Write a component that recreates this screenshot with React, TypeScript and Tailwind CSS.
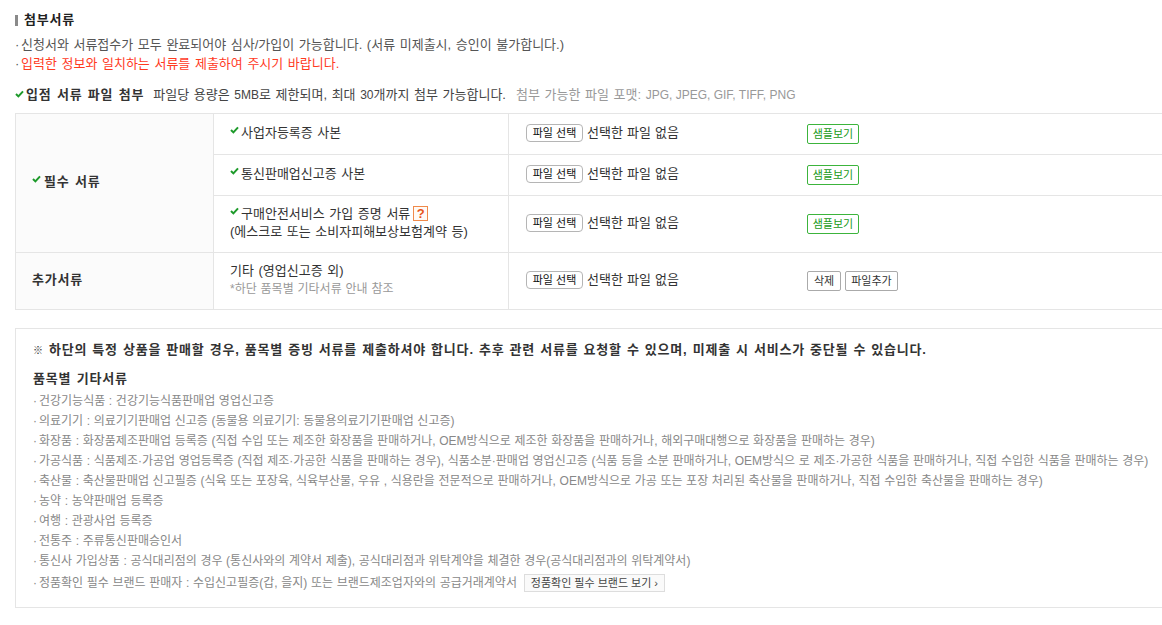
const FONT = "font-['Liberation_Sans','Noto_Sans_CJK_KR',sans-serif]";

const Check = ({ className = "" }: { className?: string }) => (
  <svg width="9" height="8" viewBox="0 0 9 8" className={`inline-block shrink-0 ${className}`}>
    <path d="M1 4l2.4 2.4L8 1.4" fill="none" stroke="#1d9a2a" strokeWidth="2" />
  </svg>
);

const Dot = () => <span className="inline-block w-[6px]">·</span>;

const FileInput = () => (
  <div className="flex items-center">
    <button className="h-[18px] w-[57px] rounded-[4px] border border-[#b5b5b5] bg-white text-[11px] leading-[16px] text-[#111]">
      파일 선택
    </button>
    <span className="ml-[4px] text-[13px] text-[#333] [word-spacing:0.5px]">선택한 파일 없음</span>
  </div>
);

const SampleButton = () => (
  <button className="h-[20px] w-[52px] rounded-[2px] border border-[#3cb43c] bg-white text-[11px] leading-[18px] text-[#1a9a1a]">
    샘플보기
  </button>
);

const GrayButton = ({ label, width }: { label: string; width: string }) => (
  <button className={`h-[20px] ${width} rounded-[2px] border border-[#aaa] bg-white text-[11px] leading-[18px] text-[#333]`}>
    {label}
  </button>
);

const Row = ({ rowClass, name, action }: { rowClass: string; name: React.ReactNode; action: React.ReactNode }) => (
  <div className={`flex ${rowClass} border-b border-[#e5e5e5] last:border-b-0`}>
    <div className="flex w-[295px] shrink-0 items-center border-r border-[#e5e5e5] pb-[3px] pl-[16px] text-[13px] leading-[18px] text-[#333]">
      <div>{name}</div>
    </div>
    <div className="flex flex-1 items-center pl-[17px]">
      <div className="w-[281px] pb-[3px]">
        <FileInput />
      </div>
      <div className="flex gap-[4px]">{action}</div>
    </div>
  </div>
);

const items = [
  "건강기능식품 : 건강기능식품판매업 영업신고증",
  "의료기기 : 의료기기판매업 신고증 (동물용 의료기기: 동물용의료기기판매업 신고증)",
  "화장품 : 화장품제조판매업 등록증 (직접 수입 또는 제조한 화장품을 판매하거나, OEM방식으로 제조한 화장품을 판매하거나, 해외구매대행으로 화장품을 판매하는 경우)",
  "가공식품 : 식품제조·가공업 영업등록증 (직접 제조·가공한 식품을 판매하는 경우), 식품소분·판매업 영업신고증 (식품 등을 소분 판매하거나, OEM방식으 로 제조·가공한 식품을 판매하거나, 직접 수입한 식품을 판매하는 경우)",
  "축산물 : 축산물판매업 신고필증 (식육 또는 포장육, 식육부산물, 우유 , 식용란을 전문적으로 판매하거나, OEM방식으로 가공 또는 포장 처리된 축산물을 판매하거나, 직접 수입한 축산물을 판매하는 경우)",
  "농약 : 농약판매업 등록증",
  "여행 : 관광사업 등록증",
  "전통주 : 주류통신판매승인서",
  "통신사 가입상품 : 공식대리점의 경우 (통신사와의 계약서 제출), 공식대리점과 위탁계약을 체결한 경우(공식대리점과의 위탁계약서)",
];

export default function App() {
  return (
    <div className={`${FONT} h-[625px] w-[1162px] overflow-hidden bg-white pl-[15px] pt-[12px] text-[13px] text-[#333] [word-spacing:1px]`}>
      <h3 className="flex h-[16px] items-center gap-[6px] text-[13px] font-bold tracking-[0.8px] text-[#222]">
        <span className="h-[11px] w-[3px] bg-[#8a8a8a]" />
        첨부서류
      </h3>
      <p className="mt-[7px] h-[19px] leading-[19px] text-[#555]"><Dot />신청서와 서류접수가 모두 완료되어야 심사/가입이 가능합니다. (서류 미제출시, 승인이 불가합니다.)</p>
      <p className="h-[19px] leading-[19px] text-[#ff3b1f]">
        <span className="text-[#555]"><Dot /></span>입력한 정보와 일치하는 서류를 제출하여 주시기 바랍니다.
      </p>
      <div className="mt-[12px] flex h-[19px] items-center whitespace-nowrap leading-[19px]">
        <Check className="mb-[2px]" />
        <strong className="ml-[2px] tracking-[0.8px] text-[#333]">입점 서류 파일 첨부</strong>
        <span className="ml-[9px] text-[#444]">
          파일당 용량은 <span className="text-[12px]">5MB</span>로 제한되며, 최대 <span className="text-[12px]">30</span>개까지 첨부 가능합니다.
        </span>
        <span className="ml-[10px] text-[#999]">
          첨부 가능한 파일 포맷: <span className="text-[12px] [word-spacing:0]">JPG, JPEG, GIF, TIFF, PNG</span>
        </span>
      </div>

      <div className="mt-[9px] w-[1200px] border border-[#e5e5e5]">
        <div className="flex border-b border-[#e5e5e5]">
          <div className="flex w-[198px] shrink-0 items-center border-r border-[#e5e5e5] bg-[#fbfbfb] pb-[3px] pl-[16px] font-bold">
            <Check className="mb-[6px]" />
            <span className="ml-[3px] tracking-[0.8px]">필수 서류</span>
          </div>
          <div className="flex-1">
            <Row
              rowClass="h-[41px]"
              name={<><Check className="mb-[6px]" /><span className="ml-[2px]">사업자등록증 사본</span></>}
              action={<SampleButton />}
            />
            <Row
              rowClass="h-[41px]"
              name={<><Check className="mb-[6px]" /><span className="ml-[2px]">통신판매업신고증 사본</span></>}
              action={<SampleButton />}
            />
            <Row
              rowClass="h-[56px]"
              name={
                <>
                  <div className="flex items-center">
                    <Check className="mb-[6px]" />
                    <span className="ml-[2px]">구매안전서비스 가입 증명 서류</span>
                    <span className="ml-[3px] flex h-[15px] w-[15px] items-center justify-center border border-[#f08a4a] bg-[#fffaf6] text-[13px] font-bold text-[#e8531a]">?</span>
                  </div>
                  <div>(에스크로 또는 소비자피해보상보험계약 등)</div>
                </>
              }
              action={<SampleButton />}
            />
          </div>
        </div>
        <div className="flex">
          <div className="flex w-[198px] shrink-0 items-center border-r border-[#e5e5e5] bg-[#fbfbfb] pb-[3px] pl-[16px] font-bold tracking-[0.8px]">추가서류</div>
          <div className="flex-1">
            <Row
              rowClass="h-[56px]"
              name={
                <>
                  <div>기타 (영업신고증 외)</div>
                  <div className="text-[12px] text-[#999] [word-spacing:0.5px]">*하단 품목별 기타서류 안내 참조</div>
                </>
              }
              action={
                <>
                  <GrayButton label="삭제" width="w-[34px]" />
                  <GrayButton label="파일추가" width="w-[53px]" />
                </>
              }
            />
          </div>
        </div>
      </div>

      <div className="mt-[18px] h-[280px] w-[1200px] border border-[#e5e5e5] pl-[17px] pt-[11px]">
        <p className="whitespace-nowrap font-bold leading-[19px] tracking-[0.8px] text-[#333] [word-spacing:0.7px]">
          <span className="text-[10px]">※</span> 하단의 특정 상품을 판매할 경우, 품목별 증빙 서류를 제출하셔야 합니다. 추후 관련 서류를 요청할 수 있으며, 미제출 시 서비스가 중단될 수 있습니다.
        </p>
        <h4 className="mt-[9px] font-bold leading-[19px] tracking-[0.8px]">품목별 기타서류</h4>
        <ul className="mt-[3px] text-[12px] leading-[20px] text-[#888] [word-spacing:0.3px]">
          {items.map((item) => (
            <li key={item} className="whitespace-nowrap"><Dot />{item}</li>
          ))}
          <li className="mt-[2px] flex items-center whitespace-nowrap">
            <Dot />정품확인 필수 브랜드 판매자 : 수입신고필증(갑, 을지) 또는 브랜드제조업자와의 공급거래계약서
            <button className="ml-[7px] h-[18px] w-[141px] border border-[#ddd] bg-[#fafafa] text-[11px] leading-[16px] text-[#444] [word-spacing:0]">정품확인 필수 브랜드 보기 ›</button>
          </li>
        </ul>
      </div>
    </div>
  );
}
